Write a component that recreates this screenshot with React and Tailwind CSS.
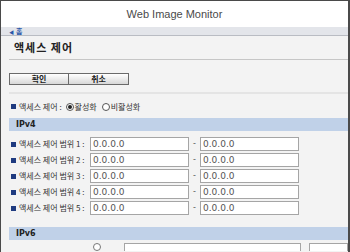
import React from "react";

const kr = { fontFamily: '"Noto Sans CJK KR", "Noto Sans", sans-serif' };
const vd = { fontFamily: '"DejaVu Sans", "Liberation Sans", sans-serif' };

function Bullet() {
  return <span className="inline-block w-[5px] h-[5px] bg-[#1f3b80] mr-[3px] shrink-0" />;
}

function Row({ n }) {
  return (
    <div className="h-[16px] flex items-center">
      <div className="w-[81px] pl-[2px] flex items-center text-[8px] text-[#333] whitespace-nowrap leading-none" style={kr}>
        <Bullet />
        <span>액세스 제어 범위 {n} :</span>
      </div>
      <div className="w-[99px] h-[14px] bg-white border border-[#a5a5a5] flex items-center pl-[2px] text-[9px] text-[#555] leading-none" style={vd}>
        0.0.0.0
      </div>
      <span className="w-[11px] text-center text-[8px] text-[#555]" style={vd}>-</span>
      <div className="w-[99px] h-[14px] bg-white border border-[#a5a5a5] flex items-center pl-[2px] text-[9px] text-[#555] leading-none" style={vd}>
        0.0.0.0
      </div>
    </div>
  );
}

export default function App() {
  return (
    <div className="w-[350px] h-[252px] overflow-hidden bg-[#f3f3f3] border-t border-l border-r-2 border-[#4a4a4a] flex flex-col">
      <div className="h-[26px] shrink-0 bg-white flex items-center justify-center text-[11px] text-[#4a4a4a]" style={{ fontFamily: '"Liberation Sans", Arial, sans-serif' }}>
        Web Image Monitor
      </div>
      <div className="h-[9px] shrink-0 bg-[#e3e5ea] border-b border-[#b9bcc3] flex items-center pl-[8px] text-[7px] text-[#2a56a8] leading-none font-bold" style={kr}>
        <span className="text-[5px] mr-[2px]">◀</span>홈
      </div>
      <div className="flex-1 flex flex-col pl-[8px]">
        <div className="h-[23px] shrink-0 flex items-center pl-[5px] text-[11px] font-bold text-[#222] leading-none tracking-[1px]" style={kr}>
          액세스 제어
        </div>
        <div className="h-px bg-[#c6c6c6] shrink-0" />
        <div className="h-[13px] shrink-0" />
        <div className="flex shrink-0">
          <div className="w-[60px] h-[12px] border border-[#6a6a6a] bg-gradient-to-b from-white to-[#d8d8d8] flex items-center justify-center text-[8px] font-bold text-[#222] leading-none" style={kr}>
            확인
          </div>
          <div className="w-[60px] h-[12px] border border-l-0 border-[#6a6a6a] bg-gradient-to-b from-white to-[#d8d8d8] flex items-center justify-center text-[8px] font-bold text-[#222] leading-none" style={kr}>
            취소
          </div>
        </div>
        <div className="h-[7px] shrink-0" />
        <div className="h-[2px] bg-[#e4e4e4] shrink-0" />
        <div className="h-[22px] shrink-0 flex items-center pt-[3px] pl-[2px] text-[8px] text-[#333] leading-none whitespace-nowrap" style={kr}>
          <Bullet />
          <span>액세스 제어 :</span>
          <span className="ml-[4px] w-[8px] h-[8px] rounded-full border border-[#555] bg-white flex items-center justify-center">
            <span className="w-[4px] h-[4px] rounded-full bg-[#222]" />
          </span>
          <span className="ml-[1px]">활성화</span>
          <span className="ml-[5px] w-[8px] h-[8px] rounded-full border border-[#555] bg-white" />
          <span className="ml-[1px]">비활성화</span>
        </div>
        <div className="h-[2px] shrink-0" />
        <div className="h-[13px] shrink-0 bg-[#c0d1e8] flex items-center pl-[7px] text-[8px] font-bold text-[#222] leading-none" style={vd}>
          IPv4
        </div>
        <div className="h-[5px] shrink-0" />
        <Row n={1} />
        <Row n={2} />
        <Row n={3} />
        <Row n={4} />
        <Row n={5} />
        <div className="h-[11px] shrink-0" />
        <div className="h-[13px] shrink-0 bg-[#c0d1e8] flex items-center pl-[7px] text-[8px] font-bold text-[#222] leading-none" style={vd}>
          IPv6
        </div>
        <div className="h-[8px] shrink-0 flex items-end">
          <span className="ml-[84px] w-[8px] h-[8px] rounded-full border border-[#777] bg-white translate-y-[3px]" />
          <span className="ml-[23px] w-[180px] h-[8px] border border-[#a5a5a5] border-b-0 bg-white translate-y-[3px]" />
          <span className="ml-[8px] w-[40px] h-[8px] border border-[#a5a5a5] border-b-0 bg-white translate-y-[3px]" />
        </div>
      </div>
    </div>
  );
}
